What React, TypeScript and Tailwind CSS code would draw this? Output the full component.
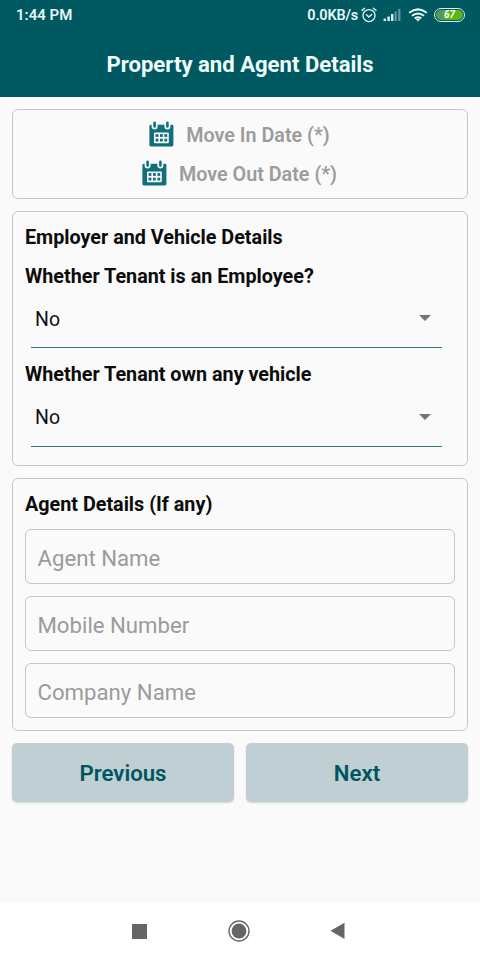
import React from "react";

function CalendarIcon() {
  return (
    <svg width="26" height="26" viewBox="0 0 26 26" className="mb-[2px] shrink-0">
      <path
        fill="#10707a"
        d="M1.4 5.2Q1.4 3.8 2.8 3.8H3.6V5.4A3 3 0 0 0 9.6 5.4V3.8H16.4V5.4A3 3 0 0 0 22.4 5.4V3.8H24Q25.4 3.8 25.4 5.2V24Q25.4 25.4 24 25.4H2.8Q1.4 25.4 1.4 24Z"
      />
      <path d="M6.6 1.8V5.4M19.4 1.8V5.4" stroke="#10707a" strokeWidth="2.6" strokeLinecap="round" />
      <rect x="6" y="11.4" width="14.8" height="10.8" rx="0.8" fill="#fafafa" />
      <g fill="#10707a">
        <rect x="7.6" y="13.1" width="2.8" height="2.8" />
        <rect x="12" y="13.1" width="2.8" height="2.8" />
        <rect x="16.4" y="13.1" width="2.8" height="2.8" />
        <rect x="7.6" y="17.7" width="2.8" height="2.8" />
        <rect x="12" y="17.7" width="2.8" height="2.8" />
        <rect x="16.4" y="17.7" width="2.8" height="2.8" />
      </g>
    </svg>
  );
}

function StatusBar() {
  return (
    <div className="flex h-[31px] items-center justify-between pl-4 pr-[15px] text-[14.5px] leading-[31px] font-semibold text-[#e6f7f8]">
      <span className="text-[15px]">1:44 PM</span>
      <div className="flex items-center">
        <span className="tracking-[-0.2px]">0.0KB/s</span>
        <svg width="16" height="16" viewBox="0 0 16 16" className="ml-[3px] mb-px" fill="none" stroke="#d9f0f2" strokeWidth="1.4" strokeLinecap="round">
          <circle cx="8" cy="8.6" r="6" />
          <path d="M1 3.4L3.6 1.2M15 3.4L12.4 1.2M5.5 7.8L7.8 10L10.6 7.6" />
        </svg>
        <svg width="19" height="14" viewBox="0 0 19 14" className="mb-[2px] ml-[6px]">
          <g fill="#d9f0f2">
            <rect x="0.6" y="10.5" width="2.4" height="2.5" />
            <rect x="4.4" y="8.5" width="2.4" height="4.5" />
            <rect x="8" y="6" width="2.4" height="7" />
          </g>
          <g fill="#5f9ba1">
            <rect x="11.6" y="3.5" width="2.2" height="9.5" />
            <rect x="15.2" y="1" width="2.2" height="12" />
          </g>
        </svg>
        <svg width="20" height="14" viewBox="0 0 20 14" className="mb-[2px] ml-[6px]" fill="none" stroke="#e6f7f8" strokeWidth="2">
          <path d="M1.2 4.8Q10 -2 18.8 4.8M4 7.8Q10 3.2 16 7.8M6.7 10.5Q10 8 13.3 10.5" />
          <path d="M7.8 11.2Q10 9.8 12.2 11.2L10 13.6Z" fill="#e6f7f8" stroke="none" />
        </svg>
        <div className="mb-[2px] ml-[6px] flex h-[14px] w-[31px] rounded-full border-[1.5px] border-[#d9f0f2] p-px">
          <div className="flex h-full w-full items-center justify-center rounded-full bg-linear-to-r from-[#4d9c5c] from-20% to-[#58b816] to-40% text-[10px] leading-none font-bold text-white italic">
            67
          </div>
        </div>
      </div>
    </div>
  );
}

function Card({ className, children }: { className: string; children: React.ReactNode }) {
  return <section className={`flex flex-col rounded-[6px] border-[1.5px] border-[#c6c6c6] ${className}`}>{children}</section>;
}

function DateRow({ label }: { label: string }) {
  return (
    <div className="flex h-[39px] items-center justify-center gap-3 pr-[2px] text-[19.75px] font-semibold text-[#9c9c9c]">
      <CalendarIcon />
      <span className="pt-[2px]">{label}</span>
    </div>
  );
}

function Select({ label }: { label: string }) {
  return (
    <div className="flex h-[98.7px] flex-col">
      <h3 className="h-[39px] text-[19.75px] leading-[40px] font-bold text-[#0c0c0c]">{label}</h3>
      <div className="ml-[6px] flex h-[52.5px] w-[411px] items-center justify-between border-b border-[#2f747c] pr-[11px] pb-[6px] pl-1 text-[19.5px] text-[#111]">
        <span className="pt-[2px]">No</span>
        <svg width="12" height="6" viewBox="0 0 12 6">
          <path d="M0 0H12L6 6Z" fill="#757575" />
        </svg>
      </div>
    </div>
  );
}

function Field({ placeholder }: { placeholder: string }) {
  return (
    <input
      placeholder={placeholder}
      className="h-[55px] w-full rounded-[6px] border-[1.5px] border-[#c6c6c6] bg-transparent px-[11.5px] pt-[2px] text-[22.2px] text-[#333] outline-none placeholder:text-[#9b9b9b]"
    />
  );
}

function ActionButton({ label }: { label: string }) {
  return (
    <button className="h-[59px] flex-1 rounded-[5px] bg-[#bfcfd4] pt-[2px] text-[22.2px] font-semibold text-[#00565e] shadow-[0_1px_2px_rgba(0,0,0,0.15)]">
      {label}
    </button>
  );
}

export default function App() {
  return (
    <div className="flex h-[960px] w-[480px] flex-col overflow-hidden bg-[#fafafa] font-[Roboto,sans-serif]">
      <header className="h-[96.5px] shrink-0 bg-[#005860]">
        <StatusBar />
        <h1 className="text-center text-[22.1px] leading-[67px] font-bold text-[#f0fdfd]">Property and Agent Details</h1>
      </header>
      <main className="flex flex-1 flex-col gap-3 px-3 pt-[12.5px]">
        <Card className="h-[90px] pt-[5px]">
          <DateRow label="Move In Date (*)" />
          <DateRow label="Move Out Date (*)" />
        </Card>
        <Card className="h-[255px] px-3 pt-[6px]">
          <h2 className="h-[38.5px] text-[19.75px] leading-[40px] font-bold text-[#0c0c0c]">Employer and Vehicle Details</h2>
          <Select label="Whether Tenant is an Employee?" />
          <Select label="Whether Tenant own any vehicle" />
        </Card>
        <Card className="h-[253px] px-3 pt-[6px]">
          <h2 className="h-[44px] text-[19.75px] leading-[40px] font-bold text-[#0c0c0c]">Agent Details (If any)</h2>
          <div className="flex flex-col gap-3">
            <Field placeholder="Agent Name" />
            <Field placeholder="Mobile Number" />
            <Field placeholder="Company Name" />
          </div>
        </Card>
        <div className="flex gap-3">
          <ActionButton label="Previous" />
          <ActionButton label="Next" />
        </div>
      </main>
      <nav className="flex h-[57px] shrink-0 items-center justify-center gap-[80px] bg-white pr-[3px]">
        <div className="mb-px size-[15px] bg-[#666]" />
        <svg width="24" height="24" viewBox="0 0 24 24" className="mb-px">
          <circle cx="12" cy="12" r="10" fill="none" stroke="#666" strokeWidth="1.4" />
          <circle cx="12" cy="12" r="7.4" fill="#666" />
        </svg>
        <svg width="15" height="18" viewBox="0 0 15 18" className="-ml-px mb-px">
          <path d="M14.5 0.7V17L0.5 8.8Z" fill="#666" />
        </svg>
      </nav>
    </div>
  );
}
